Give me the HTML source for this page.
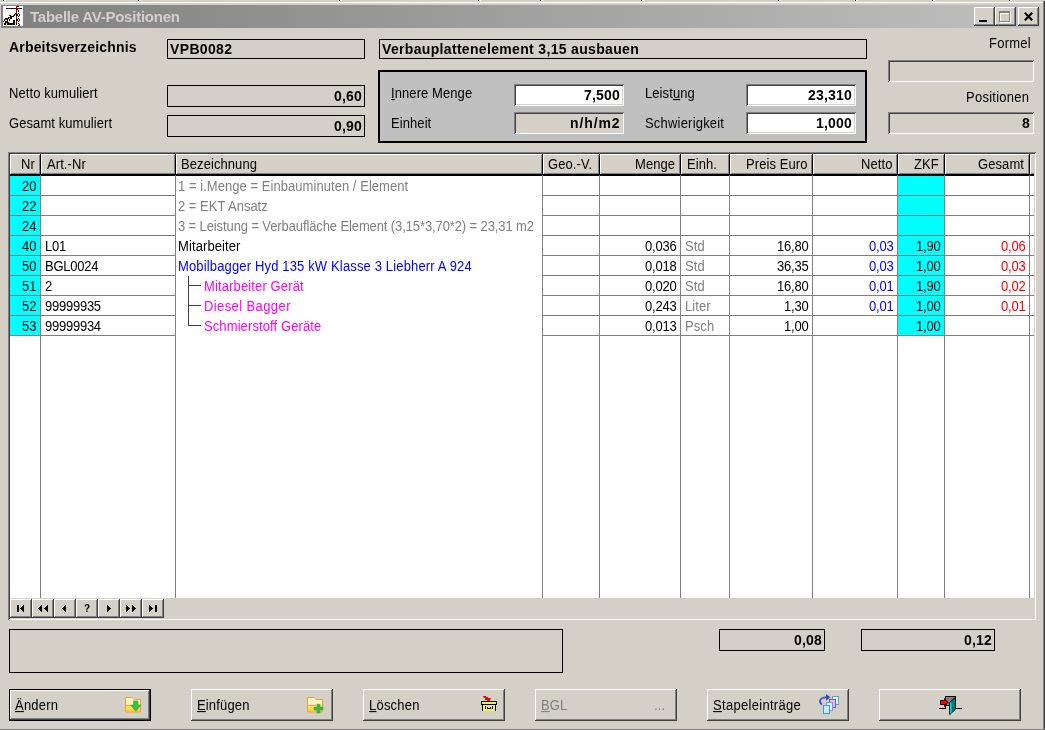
<!DOCTYPE html>
<html><head><meta charset="utf-8"><title>Tabelle AV-Positionen</title>
<style>
html,body{margin:0;padding:0}
body{width:1045px;height:730px;background:#d4d0c8;position:relative;overflow:hidden;font-family:"Liberation Sans",sans-serif;font-size:13px;color:#000}
div,span,svg{position:absolute;display:block}
span{will-change:transform}
u{text-decoration:underline;text-underline-offset:1px}
</style></head><body>
<div style="left:0px;top:2px;width:1043px;height:1px;background:#fff"></div>
<div style="left:1043px;top:1px;width:1px;height:729px;background:#808080"></div>
<div style="left:1044px;top:1px;width:1px;height:729px;background:#404040"></div>
<div style="left:0px;top:729px;width:1045px;height:1px;background:#808080"></div>
<div style="left:3px;top:0px;width:1px;height:1px;background:#000"></div>
<div style="left:4px;top:0px;width:2px;height:1px;background:#fff"></div>
<div style="left:138px;top:0px;width:1px;height:1px;background:#000"></div>
<div style="left:139px;top:0px;width:2px;height:1px;background:#fff"></div>
<div style="left:339px;top:0px;width:1px;height:1px;background:#000"></div>
<div style="left:340px;top:0px;width:2px;height:1px;background:#fff"></div>
<div style="left:478px;top:0px;width:1px;height:1px;background:#000"></div>
<div style="left:479px;top:0px;width:2px;height:1px;background:#fff"></div>
<div style="left:540px;top:0px;width:1px;height:1px;background:#000"></div>
<div style="left:541px;top:0px;width:2px;height:1px;background:#fff"></div>
<div style="left:641px;top:0px;width:1px;height:1px;background:#000"></div>
<div style="left:642px;top:0px;width:2px;height:1px;background:#fff"></div>
<div style="left:778px;top:0px;width:1px;height:1px;background:#000"></div>
<div style="left:779px;top:0px;width:2px;height:1px;background:#fff"></div>
<div style="left:855px;top:0px;width:1px;height:1px;background:#000"></div>
<div style="left:856px;top:0px;width:2px;height:1px;background:#fff"></div>
<div style="left:932px;top:0px;width:1px;height:1px;background:#000"></div>
<div style="left:933px;top:0px;width:2px;height:1px;background:#fff"></div>
<div style="left:1009px;top:0px;width:1px;height:1px;background:#000"></div>
<div style="left:1010px;top:0px;width:2px;height:1px;background:#fff"></div>
<div style="left:1px;top:5px;width:1039px;height:23px;background:linear-gradient(to right,#808080 0%,#c0c0c0 100%)"></div>
<svg style="left:3px;top:6px" width="20" height="20" viewBox="0 0 20 20" shape-rendering="crispEdges">
<rect width="20" height="20" fill="#fff"/><g>
<rect x="3" y="2" width="16" height="1" fill="#800000"/>
<rect x="3" y="2" width="2" height="1" fill="#000"/><rect x="8" y="2" width="2" height="1" fill="#000"/><rect x="17" y="2" width="2" height="1" fill="#000"/>
<rect x="13" y="0" width="1" height="19" fill="#800000"/>
<rect x="14" y="0" width="2" height="1" fill="#000"/>
<rect x="13" y="3" width="2" height="1" fill="#000"/>
<rect x="15" y="4" width="1" height="1" fill="#800000"/>
<rect x="15" y="5" width="1" height="1" fill="#000"/><rect x="15" y="7" width="1" height="1" fill="#000"/><rect x="15" y="10" width="1" height="1" fill="#000"/><rect x="15" y="12" width="1" height="1" fill="#000"/><rect x="15" y="15" width="1" height="1" fill="#000"/><rect x="15" y="17" width="1" height="1" fill="#000"/>
<rect x="16" y="8" width="1" height="2" fill="#800000"/><rect x="16" y="13" width="1" height="2" fill="#800000"/><rect x="16" y="18" width="1" height="1" fill="#800000"/><rect x="15" y="19" width="2" height="1" fill="#800000"/>
<rect x="13" y="8" width="2" height="2" fill="#000"/><rect x="13" y="13" width="2" height="2" fill="#000"/>
<rect x="12" y="7" width="1" height="1" fill="#000"/><rect x="12" y="8" width="1" height="1" fill="#f00"/><rect x="11" y="8" width="1" height="2" fill="#000"/>
<rect x="10" y="9" width="1" height="1" fill="#f00"/><rect x="9" y="10" width="2" height="1" fill="#000"/><rect x="8" y="10" width="1" height="1" fill="#800000"/><rect x="6" y="9" width="2" height="1" fill="#800000"/>
<rect x="7" y="10" width="2" height="3" fill="#000"/><rect x="6" y="11" width="1" height="1" fill="#f00"/><rect x="5" y="11" width="1" height="2" fill="#000"/><rect x="4" y="12" width="1" height="1" fill="#800000"/>
<rect x="2" y="12" width="2" height="1" fill="#000"/><rect x="2" y="13" width="2" height="1" fill="#f00"/><rect x="1" y="13" width="1" height="2" fill="#000"/><rect x="4" y="13" width="1" height="2" fill="#000"/><rect x="0" y="15" width="1" height="1" fill="#000"/>
<rect x="6" y="13" width="1" height="2" fill="#000"/>
<rect x="2" y="15" width="3" height="2" fill="#000"/><rect x="6" y="15" width="1" height="2" fill="#ff0"/>
<rect x="10" y="14" width="2" height="3" fill="#000"/>
<rect x="1" y="17" width="13" height="2" fill="#000"/><rect x="3" y="17" width="1" height="3" fill="#ff0"/><rect x="12" y="17" width="1" height="3" fill="#ff0"/><rect x="4" y="16" width="2" height="1" fill="#000"/>
</g></svg>
<span style="top:9.04px;height:16px;line-height:16px;font-size:15px;color:#d4d0c8;white-space:nowrap;font-weight:bold;letter-spacing:-0.24px;left:30px;">Tabelle AV-Positionen</span>
<div style="left:974px;top:7px;width:21px;height:19px;background:#d4d0c8;box-shadow:inset -1px -1px 0 #404040,inset 1px 1px 0 #fff,inset -2px -2px 0 #808080;"><div style="left:5px;top:13px;width:8px;height:2px;background:#000"></div></div>
<div style="left:995px;top:7px;width:21px;height:19px;background:#d4d0c8;box-shadow:inset -1px -1px 0 #404040,inset 1px 1px 0 #fff,inset -2px -2px 0 #808080;"><div style="left:5px;top:5px;width:11px;height:11px;box-sizing:border-box;border:1px solid #fff;border-top:2px solid #fff"></div><div style="left:4px;top:4px;width:11px;height:11px;box-sizing:border-box;border:1px solid #808080;border-top:2px solid #808080"></div></div>
<div style="left:1018px;top:7px;width:21px;height:19px;background:#d4d0c8;box-shadow:inset -1px -1px 0 #404040,inset 1px 1px 0 #fff,inset -2px -2px 0 #808080;"><svg style="left:6px;top:5px" width="9" height="9" viewBox="0 0 9 9"><path d="M0.8 0.8 L8.2 8.2 M8.2 0.8 L0.8 8.2" stroke="#000" stroke-width="2.1" fill="none"/></svg></div>
<span style="top:39.37px;height:16px;line-height:16px;font-size:14px;color:#000;white-space:nowrap;font-weight:bold;letter-spacing:0.18px;left:9px;">Arbeitsverzeichnis</span>
<div style="left:167px;top:39px;width:198px;height:20px;box-sizing:border-box;border:1px solid #000;"></div>
<span style="top:41.37px;height:16px;line-height:16px;font-size:14px;color:#000;white-space:nowrap;font-weight:bold;letter-spacing:0.35px;left:170px;">VPB0082</span>
<div style="left:379px;top:39px;width:488px;height:20px;box-sizing:border-box;border:1px solid #000;"></div>
<span style="top:41.37px;height:16px;line-height:16px;font-size:14px;color:#000;white-space:nowrap;font-weight:bold;letter-spacing:0.33px;left:382px;">Verbauplattenelement 3,15 ausbauen</span>
<span style="top:85.70px;height:16px;line-height:16px;font-size:13px;color:#000;white-space:nowrap;letter-spacing:0.08px;transform:scaleY(1.075);transform-origin:0 12.30px;left:9px;">Netto kumuliert</span>
<span style="top:115.70px;height:16px;line-height:16px;font-size:13px;color:#000;white-space:nowrap;letter-spacing:0.08px;transform:scaleY(1.075);transform-origin:0 12.30px;left:9px;">Gesamt kumuliert</span>
<div style="left:167px;top:85px;width:198px;height:22px;box-sizing:border-box;border:1px solid #000;"></div>
<span style="top:88.37px;height:16px;line-height:16px;font-size:14px;color:#000;white-space:nowrap;font-weight:bold;letter-spacing:0.2px;right:682.80px;">0,60</span>
<div style="left:167px;top:115px;width:198px;height:22px;box-sizing:border-box;border:1px solid #000;"></div>
<span style="top:118.37px;height:16px;line-height:16px;font-size:14px;color:#000;white-space:nowrap;font-weight:bold;letter-spacing:0.2px;right:682.80px;">0,90</span>
<div style="left:378px;top:70px;width:489px;height:73px;box-sizing:border-box;border:2px solid #000;background:#c0c0c0"></div>
<span style="top:85.70px;height:16px;line-height:16px;font-size:13px;color:#000;white-space:nowrap;letter-spacing:0.08px;transform:scaleY(1.075);transform-origin:0 12.30px;left:391px;"><u>I</u>nnere Menge</span>
<span style="top:115.70px;height:16px;line-height:16px;font-size:13px;color:#000;white-space:nowrap;letter-spacing:0.08px;transform:scaleY(1.075);transform-origin:0 12.30px;left:391px;">Einheit</span>
<div style="left:514px;top:84px;width:110px;height:22px;background:#fff;box-shadow:inset 1px 1px 0 #808080,inset -1px -1px 0 #fff,inset 2px 2px 0 #404040,inset -2px -2px 0 #d4d0c8;"></div>
<span style="top:87.37px;height:16px;line-height:16px;font-size:14px;color:#000;white-space:nowrap;font-weight:bold;letter-spacing:0.2px;right:424.80px;">7,500</span>
<div style="left:514px;top:112px;width:110px;height:22px;background:#d4d0c8;box-shadow:inset 1px 1px 0 #808080,inset -1px -1px 0 #fff,inset 2px 2px 0 #404040,inset -2px -2px 0 #d4d0c8;"></div>
<span style="top:115.37px;height:16px;line-height:16px;font-size:14px;color:#000;white-space:nowrap;font-weight:bold;letter-spacing:0.9px;right:424.10px;">n/h/m2</span>
<span style="top:85.70px;height:16px;line-height:16px;font-size:13px;color:#000;white-space:nowrap;letter-spacing:0.08px;transform:scaleY(1.075);transform-origin:0 12.30px;left:645px;">Leist<u>u</u>ng</span>
<span style="top:115.70px;height:16px;line-height:16px;font-size:13px;color:#000;white-space:nowrap;letter-spacing:0.2px;transform:scaleY(1.075);transform-origin:0 12.30px;left:645px;">Schwierigkeit</span>
<div style="left:746px;top:84px;width:110px;height:22px;background:#fff;box-shadow:inset 1px 1px 0 #808080,inset -1px -1px 0 #fff,inset 2px 2px 0 #404040,inset -2px -2px 0 #d4d0c8;"></div>
<span style="top:87.37px;height:16px;line-height:16px;font-size:14px;color:#000;white-space:nowrap;font-weight:bold;letter-spacing:0.2px;right:192.80px;">23,310</span>
<div style="left:746px;top:112px;width:110px;height:22px;background:#fff;box-shadow:inset 1px 1px 0 #808080,inset -1px -1px 0 #fff,inset 2px 2px 0 #404040,inset -2px -2px 0 #d4d0c8;"></div>
<span style="top:115.37px;height:16px;line-height:16px;font-size:14px;color:#000;white-space:nowrap;font-weight:bold;letter-spacing:0.2px;right:192.80px;">1,000</span>
<span style="top:35.70px;height:16px;line-height:16px;font-size:13px;color:#000;white-space:nowrap;letter-spacing:0.25px;transform:scaleY(1.075);transform-origin:0 12.30px;right:13.75px;">Formel</span>
<div style="left:888px;top:60px;width:146px;height:22px;box-shadow:inset 1px 1px 0 #808080,inset -1px -1px 0 #fff,inset 2px 2px 0 #404040,inset -2px -2px 0 #d4d0c8;"></div>
<span style="top:89.70px;height:16px;line-height:16px;font-size:13px;color:#000;white-space:nowrap;letter-spacing:0.25px;transform:scaleY(1.075);transform-origin:0 12.30px;right:15.75px;">Positionen</span>
<div style="left:888px;top:112px;width:146px;height:22px;box-shadow:inset 1px 1px 0 #808080,inset -1px -1px 0 #fff,inset 2px 2px 0 #404040,inset -2px -2px 0 #d4d0c8;"></div>
<span style="top:115.37px;height:16px;line-height:16px;font-size:14px;color:#000;white-space:nowrap;font-weight:bold;letter-spacing:0.2px;right:14.80px;">8</span>
<div style="left:8px;top:152px;width:1028px;height:468px;box-shadow:inset 1px 1px 0 #808080,inset -1px -1px 0 #fff,inset 2px 2px 0 #404040,inset -2px -2px 0 #d4d0c8;"></div>
<div style="left:10px;top:175px;width:1024px;height:423px;background:#fff"></div>
<div style="left:10px;top:154px;width:31px;height:21px;background:#d4d0c8;box-shadow:inset -1px -1px 0 #000,inset 1px 1px 0 #fff,inset -2px -2px 0 #808080;"></div>
<span style="top:156.70px;height:16px;line-height:16px;font-size:13px;color:#000;white-space:nowrap;letter-spacing:0.08px;transform:scaleY(1.075);transform-origin:0 12.30px;right:1009.92px;">Nr</span>
<div style="left:41px;top:154px;width:135px;height:21px;background:#d4d0c8;box-shadow:inset -1px -1px 0 #000,inset 1px 1px 0 #fff,inset -2px -2px 0 #808080;"></div>
<span style="top:156.70px;height:16px;line-height:16px;font-size:13px;color:#000;white-space:nowrap;letter-spacing:0.08px;transform:scaleY(1.075);transform-origin:0 12.30px;left:47px;">Art.-Nr</span>
<div style="left:176px;top:154px;width:367px;height:21px;background:#d4d0c8;box-shadow:inset -1px -1px 0 #000,inset 1px 1px 0 #fff,inset -2px -2px 0 #808080;"></div>
<span style="top:156.70px;height:16px;line-height:16px;font-size:13px;color:#000;white-space:nowrap;letter-spacing:0.08px;transform:scaleY(1.075);transform-origin:0 12.30px;left:181px;">Bezeichnung</span>
<div style="left:543px;top:154px;width:57px;height:21px;background:#d4d0c8;box-shadow:inset -1px -1px 0 #000,inset 1px 1px 0 #fff,inset -2px -2px 0 #808080;"></div>
<span style="top:156.70px;height:16px;line-height:16px;font-size:13px;color:#000;white-space:nowrap;letter-spacing:0.08px;transform:scaleY(1.075);transform-origin:0 12.30px;left:548px;">Geo.-V.</span>
<div style="left:600px;top:154px;width:81px;height:21px;background:#d4d0c8;box-shadow:inset -1px -1px 0 #000,inset 1px 1px 0 #fff,inset -2px -2px 0 #808080;"></div>
<span style="top:156.70px;height:16px;line-height:16px;font-size:13px;color:#000;white-space:nowrap;letter-spacing:0.08px;transform:scaleY(1.075);transform-origin:0 12.30px;right:369.92px;">Menge</span>
<div style="left:681px;top:154px;width:49px;height:21px;background:#d4d0c8;box-shadow:inset -1px -1px 0 #000,inset 1px 1px 0 #fff,inset -2px -2px 0 #808080;"></div>
<span style="top:156.70px;height:16px;line-height:16px;font-size:13px;color:#000;white-space:nowrap;letter-spacing:0.08px;transform:scaleY(1.075);transform-origin:0 12.30px;left:687px;">Einh.</span>
<div style="left:730px;top:154px;width:83px;height:21px;background:#d4d0c8;box-shadow:inset -1px -1px 0 #000,inset 1px 1px 0 #fff,inset -2px -2px 0 #808080;"></div>
<span style="top:156.70px;height:16px;line-height:16px;font-size:13px;color:#000;white-space:nowrap;letter-spacing:0.08px;transform:scaleY(1.075);transform-origin:0 12.30px;right:237.92px;">Preis Euro</span>
<div style="left:813px;top:154px;width:85px;height:21px;background:#d4d0c8;box-shadow:inset -1px -1px 0 #000,inset 1px 1px 0 #fff,inset -2px -2px 0 #808080;"></div>
<span style="top:156.70px;height:16px;line-height:16px;font-size:13px;color:#000;white-space:nowrap;letter-spacing:0.08px;transform:scaleY(1.075);transform-origin:0 12.30px;right:152.92px;">Netto</span>
<div style="left:898px;top:154px;width:47px;height:21px;background:#d4d0c8;box-shadow:inset -1px -1px 0 #000,inset 1px 1px 0 #fff,inset -2px -2px 0 #808080;"></div>
<span style="top:156.70px;height:16px;line-height:16px;font-size:13px;color:#000;white-space:nowrap;letter-spacing:0.08px;transform:scaleY(1.075);transform-origin:0 12.30px;right:105.92px;">ZKF</span>
<div style="left:945px;top:154px;width:85px;height:21px;background:#d4d0c8;box-shadow:inset -1px -1px 0 #000,inset 1px 1px 0 #fff,inset -2px -2px 0 #808080;"></div>
<span style="top:156.70px;height:16px;line-height:16px;font-size:13px;color:#000;white-space:nowrap;letter-spacing:0.08px;transform:scaleY(1.075);transform-origin:0 12.30px;right:20.92px;">Gesamt</span>
<div style="left:1030px;top:154px;width:4px;height:21px;background:#d4d0c8;box-shadow:inset 0 -1px 0 #000,inset 1px 1px 0 #fff,inset 0 -2px 0 #808080;"></div>
<div style="left:10px;top:175px;width:1024px;height:1px;background:#000"></div>
<div style="left:40px;top:175px;width:1px;height:423px;background:#808080"></div>
<div style="left:175px;top:175px;width:1px;height:423px;background:#808080"></div>
<div style="left:542px;top:175px;width:1px;height:423px;background:#808080"></div>
<div style="left:599px;top:175px;width:1px;height:423px;background:#808080"></div>
<div style="left:680px;top:175px;width:1px;height:423px;background:#808080"></div>
<div style="left:729px;top:175px;width:1px;height:423px;background:#808080"></div>
<div style="left:812px;top:175px;width:1px;height:423px;background:#808080"></div>
<div style="left:897px;top:175px;width:1px;height:423px;background:#808080"></div>
<div style="left:944px;top:175px;width:1px;height:423px;background:#808080"></div>
<div style="left:1029px;top:175px;width:1px;height:423px;background:#808080"></div>
<div style="left:10px;top:176px;width:30px;height:19px;background:#00ffff"></div>
<div style="left:898px;top:176px;width:46px;height:19px;background:#00ffff"></div>
<div style="left:10px;top:195px;width:166px;height:1px;background:#808080"></div>
<div style="left:542px;top:195px;width:492px;height:1px;background:#808080"></div>
<span style="top:178.70px;height:16px;line-height:16px;font-size:13px;color:#000;white-space:nowrap;letter-spacing:0.08px;transform:scaleY(1.075);transform-origin:0 12.30px;right:1008.42px;">20</span>
<span style="top:178.70px;height:16px;line-height:16px;font-size:13px;color:#808080;white-space:nowrap;letter-spacing:0.05px;transform:scaleY(1.075);transform-origin:0 12.30px;left:178px;">1 = i.Menge = Einbauminuten / Element</span>
<div style="left:10px;top:196px;width:30px;height:19px;background:#00ffff"></div>
<div style="left:898px;top:196px;width:46px;height:19px;background:#00ffff"></div>
<div style="left:10px;top:215px;width:166px;height:1px;background:#808080"></div>
<div style="left:542px;top:215px;width:492px;height:1px;background:#808080"></div>
<span style="top:198.70px;height:16px;line-height:16px;font-size:13px;color:#000;white-space:nowrap;letter-spacing:0.08px;transform:scaleY(1.075);transform-origin:0 12.30px;right:1008.42px;">22</span>
<span style="top:198.70px;height:16px;line-height:16px;font-size:13px;color:#808080;white-space:nowrap;transform:scaleY(1.075);transform-origin:0 12.30px;left:178px;">2 = EKT Ansatz</span>
<div style="left:10px;top:216px;width:30px;height:19px;background:#00ffff"></div>
<div style="left:898px;top:216px;width:46px;height:19px;background:#00ffff"></div>
<div style="left:10px;top:235px;width:166px;height:1px;background:#808080"></div>
<div style="left:542px;top:235px;width:492px;height:1px;background:#808080"></div>
<span style="top:218.70px;height:16px;line-height:16px;font-size:13px;color:#000;white-space:nowrap;letter-spacing:0.08px;transform:scaleY(1.075);transform-origin:0 12.30px;right:1008.42px;">24</span>
<span style="top:218.70px;height:16px;line-height:16px;font-size:13px;color:#808080;white-space:nowrap;letter-spacing:-0.11px;transform:scaleY(1.075);transform-origin:0 12.30px;left:178px;">3 = Leistung = Verbaufläche Element (3,15*3,70*2) = 23,31 m2</span>
<div style="left:10px;top:236px;width:30px;height:19px;background:#00ffff"></div>
<div style="left:898px;top:236px;width:46px;height:19px;background:#00ffff"></div>
<div style="left:10px;top:255px;width:166px;height:1px;background:#808080"></div>
<div style="left:542px;top:255px;width:492px;height:1px;background:#808080"></div>
<span style="top:238.70px;height:16px;line-height:16px;font-size:13px;color:#000;white-space:nowrap;letter-spacing:0.08px;transform:scaleY(1.075);transform-origin:0 12.30px;right:1008.42px;">40</span>
<span style="top:238.70px;height:16px;line-height:16px;font-size:13px;color:#000;white-space:nowrap;letter-spacing:-0.25px;transform:scaleY(1.075);transform-origin:0 12.30px;left:45px;">L01</span>
<span style="top:238.70px;height:16px;line-height:16px;font-size:13px;color:#000;white-space:nowrap;letter-spacing:0.1px;transform:scaleY(1.075);transform-origin:0 12.30px;left:178px;">Mitarbeiter</span>
<span style="top:238.70px;height:16px;line-height:16px;font-size:13px;color:#000;white-space:nowrap;letter-spacing:-0.2px;transform:scaleY(1.075);transform-origin:0 12.30px;right:368.70px;">0,036</span>
<span style="top:238.70px;height:16px;line-height:16px;font-size:13px;color:#808080;white-space:nowrap;letter-spacing:0.08px;transform:scaleY(1.075);transform-origin:0 12.30px;left:685px;">Std</span>
<span style="top:238.70px;height:16px;line-height:16px;font-size:13px;color:#000;white-space:nowrap;letter-spacing:-0.2px;transform:scaleY(1.075);transform-origin:0 12.30px;right:236.70px;">16,80</span>
<span style="top:238.70px;height:16px;line-height:16px;font-size:13px;color:#0000ff;white-space:nowrap;letter-spacing:-0.2px;transform:scaleY(1.075);transform-origin:0 12.30px;right:151.70px;">0,03</span>
<span style="top:238.70px;height:16px;line-height:16px;font-size:13px;color:#000;white-space:nowrap;letter-spacing:-0.2px;transform:scaleY(1.075);transform-origin:0 12.30px;right:104.70px;">1,90</span>
<span style="top:238.70px;height:16px;line-height:16px;font-size:13px;color:#ff0000;white-space:nowrap;letter-spacing:-0.2px;transform:scaleY(1.075);transform-origin:0 12.30px;right:19.70px;">0,06</span>
<div style="left:10px;top:256px;width:30px;height:19px;background:#00ffff"></div>
<div style="left:898px;top:256px;width:46px;height:19px;background:#00ffff"></div>
<div style="left:10px;top:275px;width:166px;height:1px;background:#808080"></div>
<div style="left:542px;top:275px;width:492px;height:1px;background:#808080"></div>
<span style="top:258.70px;height:16px;line-height:16px;font-size:13px;color:#000;white-space:nowrap;letter-spacing:0.08px;transform:scaleY(1.075);transform-origin:0 12.30px;right:1008.42px;">50</span>
<span style="top:258.70px;height:16px;line-height:16px;font-size:13px;color:#000;white-space:nowrap;letter-spacing:-0.25px;transform:scaleY(1.075);transform-origin:0 12.30px;left:45px;">BGL0024</span>
<span style="top:258.70px;height:16px;line-height:16px;font-size:13px;color:#0000ff;white-space:nowrap;letter-spacing:0.15px;transform:scaleY(1.075);transform-origin:0 12.30px;left:178px;">Mobilbagger Hyd 135 kW Klasse 3 Liebherr A 924</span>
<span style="top:258.70px;height:16px;line-height:16px;font-size:13px;color:#000;white-space:nowrap;letter-spacing:-0.2px;transform:scaleY(1.075);transform-origin:0 12.30px;right:368.70px;">0,018</span>
<span style="top:258.70px;height:16px;line-height:16px;font-size:13px;color:#808080;white-space:nowrap;letter-spacing:0.08px;transform:scaleY(1.075);transform-origin:0 12.30px;left:685px;">Std</span>
<span style="top:258.70px;height:16px;line-height:16px;font-size:13px;color:#000;white-space:nowrap;letter-spacing:-0.2px;transform:scaleY(1.075);transform-origin:0 12.30px;right:236.70px;">36,35</span>
<span style="top:258.70px;height:16px;line-height:16px;font-size:13px;color:#0000ff;white-space:nowrap;letter-spacing:-0.2px;transform:scaleY(1.075);transform-origin:0 12.30px;right:151.70px;">0,03</span>
<span style="top:258.70px;height:16px;line-height:16px;font-size:13px;color:#000;white-space:nowrap;letter-spacing:-0.2px;transform:scaleY(1.075);transform-origin:0 12.30px;right:104.70px;">1,00</span>
<span style="top:258.70px;height:16px;line-height:16px;font-size:13px;color:#ff0000;white-space:nowrap;letter-spacing:-0.2px;transform:scaleY(1.075);transform-origin:0 12.30px;right:19.70px;">0,03</span>
<div style="left:10px;top:276px;width:30px;height:19px;background:#00ffff"></div>
<div style="left:898px;top:276px;width:46px;height:19px;background:#00ffff"></div>
<div style="left:10px;top:295px;width:166px;height:1px;background:#808080"></div>
<div style="left:542px;top:295px;width:492px;height:1px;background:#808080"></div>
<span style="top:278.70px;height:16px;line-height:16px;font-size:13px;color:#000;white-space:nowrap;letter-spacing:0.08px;transform:scaleY(1.075);transform-origin:0 12.30px;right:1008.42px;">51</span>
<span style="top:278.70px;height:16px;line-height:16px;font-size:13px;color:#000;white-space:nowrap;letter-spacing:-0.25px;transform:scaleY(1.075);transform-origin:0 12.30px;left:45px;">2</span>
<span style="top:278.70px;height:16px;line-height:16px;font-size:13px;color:#ff00ff;white-space:nowrap;letter-spacing:0.13px;transform:scaleY(1.075);transform-origin:0 12.30px;left:203.5px;">Mitarbeiter Gerät</span>
<span style="top:278.70px;height:16px;line-height:16px;font-size:13px;color:#000;white-space:nowrap;letter-spacing:-0.2px;transform:scaleY(1.075);transform-origin:0 12.30px;right:368.70px;">0,020</span>
<span style="top:278.70px;height:16px;line-height:16px;font-size:13px;color:#808080;white-space:nowrap;letter-spacing:0.08px;transform:scaleY(1.075);transform-origin:0 12.30px;left:685px;">Std</span>
<span style="top:278.70px;height:16px;line-height:16px;font-size:13px;color:#000;white-space:nowrap;letter-spacing:-0.2px;transform:scaleY(1.075);transform-origin:0 12.30px;right:236.70px;">16,80</span>
<span style="top:278.70px;height:16px;line-height:16px;font-size:13px;color:#0000ff;white-space:nowrap;letter-spacing:-0.2px;transform:scaleY(1.075);transform-origin:0 12.30px;right:151.70px;">0,01</span>
<span style="top:278.70px;height:16px;line-height:16px;font-size:13px;color:#000;white-space:nowrap;letter-spacing:-0.2px;transform:scaleY(1.075);transform-origin:0 12.30px;right:104.70px;">1,90</span>
<span style="top:278.70px;height:16px;line-height:16px;font-size:13px;color:#ff0000;white-space:nowrap;letter-spacing:-0.2px;transform:scaleY(1.075);transform-origin:0 12.30px;right:19.70px;">0,02</span>
<div style="left:10px;top:296px;width:30px;height:19px;background:#00ffff"></div>
<div style="left:898px;top:296px;width:46px;height:19px;background:#00ffff"></div>
<div style="left:10px;top:315px;width:166px;height:1px;background:#808080"></div>
<div style="left:542px;top:315px;width:492px;height:1px;background:#808080"></div>
<span style="top:298.70px;height:16px;line-height:16px;font-size:13px;color:#000;white-space:nowrap;letter-spacing:0.08px;transform:scaleY(1.075);transform-origin:0 12.30px;right:1008.42px;">52</span>
<span style="top:298.70px;height:16px;line-height:16px;font-size:13px;color:#000;white-space:nowrap;letter-spacing:-0.25px;transform:scaleY(1.075);transform-origin:0 12.30px;left:45px;">99999935</span>
<span style="top:298.70px;height:16px;line-height:16px;font-size:13px;color:#ff00ff;white-space:nowrap;letter-spacing:0.4px;transform:scaleY(1.075);transform-origin:0 12.30px;left:203.5px;">Diesel Bagger</span>
<span style="top:298.70px;height:16px;line-height:16px;font-size:13px;color:#000;white-space:nowrap;letter-spacing:-0.2px;transform:scaleY(1.075);transform-origin:0 12.30px;right:368.70px;">0,243</span>
<span style="top:298.70px;height:16px;line-height:16px;font-size:13px;color:#808080;white-space:nowrap;letter-spacing:0.08px;transform:scaleY(1.075);transform-origin:0 12.30px;left:685px;">Liter</span>
<span style="top:298.70px;height:16px;line-height:16px;font-size:13px;color:#000;white-space:nowrap;letter-spacing:-0.2px;transform:scaleY(1.075);transform-origin:0 12.30px;right:236.70px;">1,30</span>
<span style="top:298.70px;height:16px;line-height:16px;font-size:13px;color:#0000ff;white-space:nowrap;letter-spacing:-0.2px;transform:scaleY(1.075);transform-origin:0 12.30px;right:151.70px;">0,01</span>
<span style="top:298.70px;height:16px;line-height:16px;font-size:13px;color:#000;white-space:nowrap;letter-spacing:-0.2px;transform:scaleY(1.075);transform-origin:0 12.30px;right:104.70px;">1,00</span>
<span style="top:298.70px;height:16px;line-height:16px;font-size:13px;color:#ff0000;white-space:nowrap;letter-spacing:-0.2px;transform:scaleY(1.075);transform-origin:0 12.30px;right:19.70px;">0,01</span>
<div style="left:10px;top:316px;width:30px;height:19px;background:#00ffff"></div>
<div style="left:898px;top:316px;width:46px;height:19px;background:#00ffff"></div>
<div style="left:10px;top:335px;width:166px;height:1px;background:#808080"></div>
<div style="left:542px;top:335px;width:492px;height:1px;background:#808080"></div>
<span style="top:318.70px;height:16px;line-height:16px;font-size:13px;color:#000;white-space:nowrap;letter-spacing:0.08px;transform:scaleY(1.075);transform-origin:0 12.30px;right:1008.42px;">53</span>
<span style="top:318.70px;height:16px;line-height:16px;font-size:13px;color:#000;white-space:nowrap;letter-spacing:-0.25px;transform:scaleY(1.075);transform-origin:0 12.30px;left:45px;">99999934</span>
<span style="top:318.70px;height:16px;line-height:16px;font-size:13px;color:#ff00ff;white-space:nowrap;letter-spacing:0.1px;transform:scaleY(1.075);transform-origin:0 12.30px;left:203.5px;">Schmierstoff Geräte</span>
<span style="top:318.70px;height:16px;line-height:16px;font-size:13px;color:#000;white-space:nowrap;letter-spacing:-0.2px;transform:scaleY(1.075);transform-origin:0 12.30px;right:368.70px;">0,013</span>
<span style="top:318.70px;height:16px;line-height:16px;font-size:13px;color:#808080;white-space:nowrap;letter-spacing:0.08px;transform:scaleY(1.075);transform-origin:0 12.30px;left:685px;">Psch</span>
<span style="top:318.70px;height:16px;line-height:16px;font-size:13px;color:#000;white-space:nowrap;letter-spacing:-0.2px;transform:scaleY(1.075);transform-origin:0 12.30px;right:236.70px;">1,00</span>
<span style="top:318.70px;height:16px;line-height:16px;font-size:13px;color:#000;white-space:nowrap;letter-spacing:-0.2px;transform:scaleY(1.075);transform-origin:0 12.30px;right:104.70px;">1,00</span>
<div style="left:188px;top:276px;width:1px;height:50px;background:#404040"></div>
<div style="left:188px;top:285px;width:13px;height:1px;background:#404040"></div>
<div style="left:188px;top:305px;width:13px;height:1px;background:#404040"></div>
<div style="left:188px;top:325px;width:13px;height:1px;background:#404040"></div>
<div style="left:10px;top:599px;width:22px;height:19px;background:#d4d0c8;box-shadow:inset -1px -1px 0 #404040,inset 1px 1px 0 #fff,inset -2px -2px 0 #808080;"><svg style="left:0;top:-1px" width="22" height="20" viewBox="0 0 22 20" shape-rendering="crispEdges"><rect x="7" y="7" width="2" height="7"/><path d="M14 7v7l-4-3.5z"/></svg></div>
<div style="left:32px;top:599px;width:22px;height:19px;background:#d4d0c8;box-shadow:inset -1px -1px 0 #404040,inset 1px 1px 0 #fff,inset -2px -2px 0 #808080;"><svg style="left:0;top:-1px" width="22" height="20" viewBox="0 0 22 20" shape-rendering="crispEdges"><path d="M10 7v7l-4-3.5z"/><path d="M16 7v7l-4-3.5z"/></svg></div>
<div style="left:54px;top:599px;width:22px;height:19px;background:#d4d0c8;box-shadow:inset -1px -1px 0 #404040,inset 1px 1px 0 #fff,inset -2px -2px 0 #808080;"><svg style="left:0;top:-1px" width="22" height="20" viewBox="0 0 22 20" shape-rendering="crispEdges"><path d="M12 7v7l-4-3.5z"/></svg></div>
<div style="left:76px;top:599px;width:22px;height:19px;background:#d4d0c8;box-shadow:inset -1px -1px 0 #404040,inset 1px 1px 0 #fff,inset -2px -2px 0 #808080;"><span style="left:0;top:1.5px;width:22px;text-align:center;font-size:10px;font-weight:bold;line-height:15px;height:15px">?</span></div>
<div style="left:98px;top:599px;width:22px;height:19px;background:#d4d0c8;box-shadow:inset -1px -1px 0 #404040,inset 1px 1px 0 #fff,inset -2px -2px 0 #808080;"><svg style="left:0;top:-1px" width="22" height="20" viewBox="0 0 22 20" shape-rendering="crispEdges"><path d="M9 7v7l4-3.5z"/></svg></div>
<div style="left:120px;top:599px;width:22px;height:19px;background:#d4d0c8;box-shadow:inset -1px -1px 0 #404040,inset 1px 1px 0 #fff,inset -2px -2px 0 #808080;"><svg style="left:0;top:-1px" width="22" height="20" viewBox="0 0 22 20" shape-rendering="crispEdges"><path d="M6 7v7l4-3.5z"/><path d="M12 7v7l4-3.5z"/></svg></div>
<div style="left:142px;top:599px;width:22px;height:19px;background:#d4d0c8;box-shadow:inset -1px -1px 0 #404040,inset 1px 1px 0 #fff,inset -2px -2px 0 #808080;"><svg style="left:0;top:-1px" width="22" height="20" viewBox="0 0 22 20" shape-rendering="crispEdges"><path d="M7 7v7l4-3.5z"/><rect x="13" y="7" width="2" height="7"/></svg></div>
<div style="left:9px;top:629px;width:554px;height:44px;box-sizing:border-box;border:1px solid #000;"></div>
<div style="left:719px;top:629px;width:106px;height:22px;box-sizing:border-box;border:1px solid #000;"></div>
<span style="top:632.37px;height:16px;line-height:16px;font-size:14px;color:#000;white-space:nowrap;font-weight:bold;letter-spacing:0.2px;right:222.80px;">0,08</span>
<div style="left:861px;top:629px;width:134px;height:22px;box-sizing:border-box;border:1px solid #000;"></div>
<span style="top:632.37px;height:16px;line-height:16px;font-size:14px;color:#000;white-space:nowrap;font-weight:bold;letter-spacing:0.2px;right:52.80px;">0,12</span>
<div style="left:9px;top:689px;width:142px;height:32px;background:#000"></div>
<div style="left:10px;top:690px;width:140px;height:30px;background:#d4d0c8;box-shadow:inset -1px -1px 0 #404040,inset 1px 1px 0 #fff,inset -2px -2px 0 #808080;"></div>
<span style="top:697.70px;height:16px;line-height:16px;font-size:13px;color:#000;white-space:nowrap;letter-spacing:0.2px;transform:scaleY(1.075);transform-origin:0 12.30px;left:15px;"><u>Ä</u>ndern</span>
<svg style="left:125px;top:697px" width="17" height="17" viewBox="0 0 17 17"><defs><linearGradient id="fg1" x1="0" y1="0" x2="0" y2="1"><stop offset="0" stop-color="#fffde6"/><stop offset="0.5" stop-color="#fff0a8"/><stop offset="0.55" stop-color="#ffe27a"/><stop offset="1" stop-color="#fbc93e"/></linearGradient></defs><path d="M0.5 0.5h7l1.5 2h6.5v12.5h-15z" fill="url(#fg1)" stroke="#f0a030"/><path d="M1 8.5h7.5l1-1.5" stroke="#f0a030" fill="none" opacity="0.8"/><path d="M8.5 4h4.5v4h3l-5.2 6.2-5.2-6.2h2.9z" fill="#3cc040" stroke="#2aa52e" stroke-width="0.6"/></svg>
<div style="left:191px;top:689px;width:142px;height:32px;background:#d4d0c8;box-shadow:inset -1px -1px 0 #404040,inset 1px 1px 0 #fff,inset -2px -2px 0 #808080;"></div>
<span style="top:697.70px;height:16px;line-height:16px;font-size:13px;color:#000;white-space:nowrap;letter-spacing:0.15px;transform:scaleY(1.075);transform-origin:0 12.30px;left:197px;"><u>E</u>infügen</span>
<svg style="left:307px;top:697px" width="17" height="17" viewBox="0 0 17 17"><defs><linearGradient id="fg2" x1="0" y1="0" x2="0" y2="1"><stop offset="0" stop-color="#fffde6"/><stop offset="0.5" stop-color="#fff0a8"/><stop offset="0.55" stop-color="#ffe27a"/><stop offset="1" stop-color="#fbc93e"/></linearGradient></defs><path d="M0.5 0.5h7l1.5 2h6.5v12.5h-15z" fill="url(#fg2)" stroke="#f0a030"/><path d="M1 8.5h7.5l1-1.5" stroke="#f0a030" fill="none" opacity="0.8"/><path d="M10 7.2h3v2.8h3v3h-3v3h-3v-3h-3v-3h3z" fill="#38b83c" stroke="#2a9a2e" stroke-width="0.4"/></svg>
<div style="left:363px;top:689px;width:142px;height:32px;background:#d4d0c8;box-shadow:inset -1px -1px 0 #404040,inset 1px 1px 0 #fff,inset -2px -2px 0 #808080;"></div>
<span style="top:697.70px;height:16px;line-height:16px;font-size:13px;color:#000;white-space:nowrap;letter-spacing:0.22px;transform:scaleY(1.075);transform-origin:0 12.30px;left:369px;"><u>L</u>öschen</span>
<svg style="left:481px;top:695px" width="16" height="17" viewBox="0 0 16 17" shape-rendering="crispEdges"><defs><pattern id="dth" width="2" height="2" patternUnits="userSpaceOnUse"><rect width="2" height="2" fill="#ffff00"/><rect width="1" height="1" fill="#e4e0a8"/><rect x="1" y="1" width="1" height="1" fill="#e4e0a8"/></pattern></defs>
<rect x="2" y="1" width="3" height="1" fill="#f00"/><rect x="3" y="2" width="4" height="1" fill="#f00"/><rect x="4" y="3" width="6" height="1" fill="#f00"/><rect x="4" y="4" width="5" height="1" fill="#f00"/><rect x="6" y="5" width="3" height="1" fill="#f00"/>
<rect x="0" y="6" width="16" height="4" fill="#000"/><rect x="1" y="7" width="14" height="2" fill="#f4f030"/>
<rect x="1" y="10" width="14" height="6" fill="#000"/><rect x="2" y="10" width="12" height="6" fill="url(#dth)"/>
<rect x="1" y="7" width="1" height="1" fill="#fff"/><rect x="3" y="7" width="1" height="1" fill="#fff"/><rect x="5" y="7" width="1" height="1" fill="#fff"/><rect x="7" y="7" width="1" height="1" fill="#fff"/><rect x="9" y="7" width="1" height="1" fill="#fff"/><rect x="11" y="7" width="1" height="1" fill="#fff"/><rect x="13" y="7" width="1" height="1" fill="#fff"/>
<rect x="4" y="11" width="1" height="3" fill="#000"/><rect x="11" y="11" width="1" height="3" fill="#000"/><rect x="6" y="12" width="1" height="1" fill="#000"/><rect x="9" y="12" width="1" height="1" fill="#000"/><rect x="6" y="13" width="4" height="1" fill="#000"/>
</svg>
<div style="left:535px;top:689px;width:142px;height:32px;background:#d4d0c8;box-shadow:inset -1px -1px 0 #404040,inset 1px 1px 0 #fff,inset -2px -2px 0 #808080;"></div>
<span style="top:697.70px;height:16px;line-height:16px;font-size:13px;color:#808080;white-space:nowrap;letter-spacing:0.15px;transform:scaleY(1.075);transform-origin:0 12.30px;left:541px;"><u>B</u>GL</span>
<span style="top:697.70px;height:16px;line-height:16px;font-size:13px;color:#808080;white-space:nowrap;letter-spacing:0.08px;transform:scaleY(1.075);transform-origin:0 12.30px;left:654px;">...</span>
<div style="left:707px;top:689px;width:142px;height:32px;background:#d4d0c8;box-shadow:inset -1px -1px 0 #404040,inset 1px 1px 0 #fff,inset -2px -2px 0 #808080;"></div>
<span style="top:697.70px;height:16px;line-height:16px;font-size:13px;color:#000;white-space:nowrap;letter-spacing:0.3px;transform:scaleY(1.075);transform-origin:0 12.30px;left:713px;"><u>S</u>tapeleinträge</span>
<svg style="left:818px;top:693px" width="22" height="22" viewBox="0 0 22 22">
<rect x="14.5" y="3.5" width="6" height="8" fill="#d8f4ff" stroke="#60a0d8"/>
<rect x="11.5" y="6.5" width="6" height="8" fill="#d8c0ec" stroke="#8058b0"/>
<rect x="8.5" y="9.5" width="6" height="8" fill="#d8f4ff" stroke="#60a0d8"/>
<rect x="5.5" y="12.5" width="6" height="8" fill="#c8ecff" stroke="#5090d0"/>
<path d="M4 11.5 C0.5 9 1.5 4.5 8 4.3" fill="none" stroke="#3858c8" stroke-width="1.8"/>
<path d="M8 1l4.5 3.3-4.5 3.5z" fill="#3050c0"/>
</svg>
<div style="left:879px;top:689px;width:142px;height:32px;background:#d4d0c8;box-shadow:inset -1px -1px 0 #404040,inset 1px 1px 0 #fff,inset -2px -2px 0 #808080;"></div>
<svg style="left:938px;top:695px" width="25" height="21" viewBox="0 0 25 21" shape-rendering="crispEdges">
<rect x="1" y="13" width="7" height="1" fill="#000"/><rect x="18" y="13" width="6" height="1" fill="#000"/>
<rect x="7" y="1" width="11" height="1" fill="#000"/><rect x="7" y="1" width="1" height="13" fill="#000"/><rect x="17" y="1" width="1" height="13" fill="#000"/>
<rect x="8" y="2" width="9" height="8" fill="#808080"/><rect x="7" y="10" width="5" height="1" fill="#000"/>
<path d="M11.7 7.3 L17.5 2.3 V14.2 L11.7 19.6z" fill="#008080" stroke="#000" shape-rendering="auto"/>
<path d="M12.8 7.6 v11" stroke="#00ffff" stroke-width="1.1" shape-rendering="auto"/>
<rect x="13.5" y="12" width="1" height="1" fill="#000"/>
<path d="M2.5 5.5h4v-2l3.3 4-3.3 4v-2h-4z" fill="#f00" stroke="#000" shape-rendering="auto"/>
</svg>
</body></html>
